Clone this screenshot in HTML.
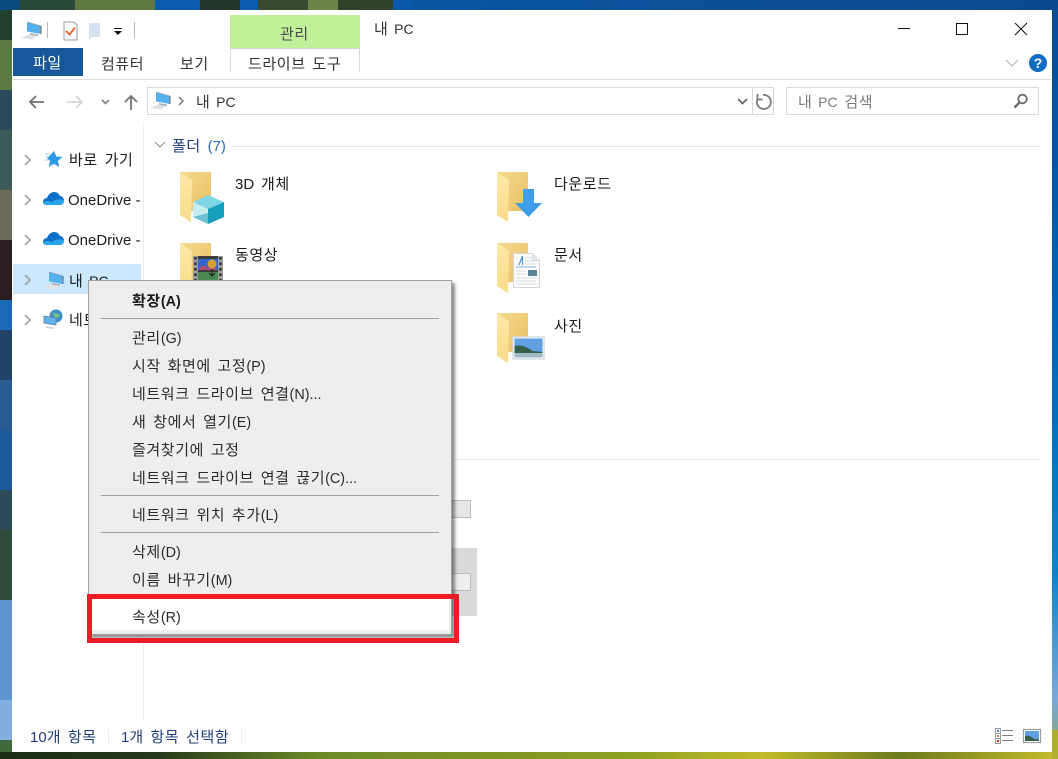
<!DOCTYPE html>
<html lang="ko">
<head>
<meta charset="utf-8">
<title>내 PC</title>
<style>
html,body{margin:0;padding:0;width:1058px;height:759px;overflow:hidden;background:#0058a8}
body{position:relative;font-family:"Liberation Sans","Noto Sans CJK KR",sans-serif;font-size:15px;color:#1a1a1a}
.a{position:absolute}
.t{position:absolute;white-space:nowrap;height:20px;line-height:20px;letter-spacing:.6px;word-spacing:2px;margin-top:2px}
.t i{font-style:normal;letter-spacing:0}
.t i.p{font-size:14px;margin-left:-1px}
svg{position:absolute;overflow:visible}
.m{color:#2b2b2b}
.m i{font-size:14.4px}
.sep{position:absolute;left:101px;width:338px;height:1px;background:#a0a0a0}
</style>
</head>
<body>
<svg width="1058" height="759" style="left:0;top:0">
<defs>
<linearGradient id="rg" x1="0" y1="0" x2="0" y2="1">
<stop offset="0" stop-color="#0b4a94"/><stop offset=".4" stop-color="#0062b4"/><stop offset=".75" stop-color="#0a82c8"/><stop offset=".92" stop-color="#7aa8d8"/><stop offset="1" stop-color="#8aa860"/>
</linearGradient>
<linearGradient id="tg" x1="0" y1="0" x2="1" y2="0">
<stop offset="0" stop-color="#0a5aa8"/><stop offset="1" stop-color="#0b4a90"/>
</linearGradient>
<linearGradient id="bg" x1="0" y1="0" x2="1" y2="0">
<stop offset="0" stop-color="#1c2c14"/><stop offset=".15" stop-color="#27381a"/><stop offset=".3" stop-color="#6c8a28"/><stop offset=".6" stop-color="#8ea020"/><stop offset=".72" stop-color="#c2bc28"/><stop offset=".85" stop-color="#6c7a1c"/><stop offset="1" stop-color="#c4bc2a"/>
</linearGradient>
</defs>
<rect width="1058" height="759" fill="url(#rg)"/>
<rect x="0" y="0" width="1058" height="10" fill="url(#tg)"/>
<rect x="0" y="0" width="20" height="10" fill="#0d4a80"/>
<rect x="20" y="0" width="55" height="10" fill="#2a4a38"/>
<rect x="75" y="0" width="80" height="10" fill="#5c7a40"/>
<rect x="155" y="0" width="45" height="10" fill="#0a5cb0"/>
<rect x="200" y="0" width="40" height="10" fill="#22382c"/>
<rect x="240" y="0" width="18" height="10" fill="#0a5cb0"/>
<rect x="258" y="0" width="50" height="10" fill="#3a4a2c"/>
<rect x="308" y="0" width="30" height="10" fill="#6c8448"/>
<rect x="338" y="0" width="55" height="10" fill="#32422a"/>
<rect x="393" y="0" width="20" height="10" fill="#0a58a8"/>
<rect x="0" y="10" width="12" height="30" fill="#21402e"/>
<rect x="0" y="40" width="12" height="50" fill="#5c7a44"/>
<rect x="0" y="90" width="12" height="40" fill="#2a4a5c"/>
<rect x="0" y="130" width="12" height="60" fill="#3c5a58"/>
<rect x="0" y="190" width="12" height="50" fill="#6c6a58"/>
<rect x="0" y="240" width="12" height="60" fill="#2a1e20"/>
<rect x="0" y="300" width="12" height="30" fill="#1a6ab8"/>
<rect x="0" y="330" width="12" height="50" fill="#1f4468"/>
<rect x="0" y="380" width="12" height="50" fill="#2a5c94"/>
<rect x="0" y="430" width="12" height="60" fill="#1c5a9c"/>
<rect x="0" y="490" width="12" height="40" fill="#2c4a5a"/>
<rect x="0" y="530" width="12" height="70" fill="#2c4c38"/>
<rect x="0" y="600" width="12" height="100" fill="#5c94d0"/>
<rect x="0" y="700" width="12" height="40" fill="#82aee0"/>
<rect x="0" y="740" width="12" height="19" fill="#3e6a3c"/>
<rect x="0" y="752" width="1058" height="7" fill="url(#bg)"/>
<rect x="1052" y="730" width="6" height="29" fill="#b0ae30"/>
</svg>

<!-- window -->
<div class="a" style="left:12px;top:10px;width:1040px;height:742px;background:#fff"></div>

<!-- QAT -->
<svg width="1058" height="100" style="left:0;top:0">
<defs>
<g id="pc">
<path d="M6 0l14 4v8L6 9.500z" fill="#55b0ee"/>
<path d="M6 0l14 4" stroke="#8fa4b4" stroke-width=".8" fill="none"/>
<path d="M20 4v8" stroke="#6e7a84" stroke-width="1.200" fill="none"/>
<path d="M9 11l8 1.200v2l-8-1.200z" fill="#aab4bc"/>
<path d="M0 16l8-3.500 9 1.500-6 3.500z" fill="#dfe3e6"/>
</g>
</defs>
<use href="#pc" x="21" y="22"/>
<rect x="47" y="22" width="1" height="16" fill="#b9b9b9"/>
<path d="M64 22h10l3 3v15H64z" fill="#fbfbfb" stroke="#9c9c9c"/>
<path d="M66 31l3.500 3.500 5.500-7" fill="none" stroke="#e8591c" stroke-width="1.700"/>
<path d="M89 23l11 0v14l-8 0-3 3z" fill="#d6e2f0"/>
<rect x="114" y="28" width="8" height="1" fill="#111"/>
<path d="M114 31h8l-4 4z" fill="#111"/>
<rect x="134" y="22" width="1" height="16" fill="#b9b9b9"/>
<!-- nav arrows -->
<path d="M44 102H30M36 96l-6 6 6 6" fill="none" stroke="#727272" stroke-width="1.800"/>
<path d="M67 102h15M76 96l6 6-6 6" fill="none" stroke="#d6d6d6" stroke-width="1.800"/>
<path d="M102 100l3.500 3.500L109 100" fill="none" stroke="#808080" stroke-width="1.600"/>
<path d="M131 110V96M125 102l6-6 6 6" fill="none" stroke="#727272" stroke-width="1.800"/>
<!-- window controls -->
<rect x="898" y="28" width="12" height="1" fill="#111"/>
<rect x="956.500" y="23.500" width="11" height="11" fill="none" stroke="#111"/>
<path d="M1015 23l12 12M1027 23l-12 12" stroke="#111" stroke-width="1" fill="none"/>
<path d="M1006 60l6 6 6-6" fill="none" stroke="#b5b5b5" stroke-width="1.100"/>
<circle cx="1038" cy="63" r="9" fill="#0f6cc4"/>
</svg>
<div class="a" style="left:1029px;top:54px;width:18px;height:18px;line-height:18px;text-align:center;color:#fff;font-weight:bold;font-size:14px">?</div>

<!-- ribbon -->
<div class="a" style="left:230px;top:15px;width:130px;height:33px;background:#c1f09b"></div>
<div class="t" style="left:280px;top:23px;color:#4a4a4a">관리</div>
<div class="t" style="left:374px;top:17px;color:#333">내 <i class="p">PC</i></div>
<div class="a" style="left:13px;top:48px;width:70px;height:28px;background:#19579b"></div>
<div class="t" style="left:33px;top:52px;color:#fff">파일</div>
<div class="t" style="left:101px;top:53px;color:#333">컴퓨터</div>
<div class="t" style="left:180px;top:53px;color:#333">보기</div>
<div class="a" style="left:230px;top:48px;width:130px;height:24px;border-left:1px solid #d9d9d9;border-right:1px solid #d9d9d9;border-top:1px solid #d4d4d4;box-sizing:border-box"></div>
<div class="t" style="left:248px;top:53px;color:#333">드라이브 도구</div>
<div class="a" style="left:12px;top:79px;width:1039px;height:1px;background:#dcdcdc"></div>

<!-- address bar -->
<div class="a" style="left:147px;top:87px;width:627px;height:28px;border:1px solid #d9d9d9;box-sizing:border-box"></div>
<div class="a" style="left:752px;top:87px;width:1px;height:28px;background:#d9d9d9"></div>
<div class="a" style="left:786px;top:87px;width:253px;height:28px;border:1px solid #d9d9d9;box-sizing:border-box"></div>
<svg width="1058" height="130" style="left:0;top:0">
<use href="#pc" x="150" y="92"/>
<path d="M179 97l4 4-4 4" fill="none" stroke="#7a7a7a" stroke-width="1.500"/>
<path d="M738 99l4.500 4.500L747 99" fill="none" stroke="#666" stroke-width="1.700"/>
<path d="M763 95a7 7 0 1 1-5.500 4M757.500 94v5.500h5" fill="none" stroke="#808080" stroke-width="1.900"/>
<circle cx="1022.500" cy="99" r="4.300" fill="none" stroke="#6a6a6a" stroke-width="1.800"/>
<path d="M1019.500 102.500l-5 5" stroke="#6a6a6a" stroke-width="2.400"/>
</svg>
<div class="t" style="left:196px;top:90px;color:#333">내 <i class="p">PC</i></div>
<div class="t" style="left:798px;top:90px;color:#7a7a7a">내 <i class="p">PC</i> 검색</div>

<!-- nav pane -->
<div class="a" style="left:143px;top:122px;width:1px;height:600px;background:#efefef"></div>
<div class="a" style="left:13px;top:264px;width:128px;height:30px;background:#cce8ff"></div>
<svg width="150" height="340" style="left:0;top:0">
<defs>
<g id="cloud">
<path d="M47 205c-3 0-4.500-2-4-4 .5-2 2.500-3 4-3 1-3.500 4-6 7-6 3 0 5 1.500 6 4 2 0 4 2 4 4.500 0 2.500-1.500 4.500-4 4.500z" fill="#0f70c8"/>
<path d="M47 205c-2.500 0-4-1.500-4-3 3-1.500 6-1 9 0 3-2.500 8-3.500 12-1.500 0 2.500-1.500 4.500-4 4.500z" fill="#2aa4ea"/>
</g>
</defs>
<g fill="none" stroke="#a6a6a6" stroke-width="1.800">
<path d="M25 155l5 5-5 5"/><path d="M25 195l5 5-5 5"/><path d="M25 235l5 5-5 5"/><path d="M25 275l5 5-5 5"/><path d="M25 315l5 5-5 5"/>
</g>
<path d="M54 151l2.400 5.500 6 .5-4.500 4 1.400 6-5.300-3.200-5.300 3.200 1.400-6-3-2.600z" fill="#2f9be8"/>
<path d="M45 154h5M46 157h3M45 160h3" stroke="#9ccbee" stroke-width="1"/>
<use href="#cloud"/>
<use href="#cloud" y="40"/>
<use href="#pc" x="43" y="272"/>
<circle cx="56" cy="316" r="6.500" fill="#3d8fc8"/>
<path d="M52 312c2 2 6 1 8 3-1 2-3 2-4 4" fill="#7ec27a"/>
<path d="M44 316l12 2v7l-12-2z" fill="#5fb4ec" stroke="#5c7f9a" stroke-width=".8"/>
<path d="M46 326l9 1.500-2 1.500-7-1z" fill="#cfd4d8"/>
</svg>
<div class="t" style="left:69px;top:149px">바로 가기</div>
<div class="a" style="left:68px;top:187px;width:74px;height:26px;overflow:hidden"><div class="t" style="left:0;top:2px;letter-spacing:0;word-spacing:0">OneDrive - Personal</div></div>
<div class="a" style="left:68px;top:227px;width:74px;height:26px;overflow:hidden"><div class="t" style="left:0;top:2px;letter-spacing:0;word-spacing:0">OneDrive - Personal</div></div>
<div class="t" style="left:69px;top:269px">내 <i class="p">PC</i></div>
<div class="t" style="left:69px;top:309px">네트워크</div>

<!-- content -->
<svg width="1058" height="759" style="left:0;top:0">
<defs>
<linearGradient id="fp" x1="0" y1="0" x2="1" y2="1"><stop offset="0" stop-color="#f5d98e"/><stop offset="1" stop-color="#e9c063"/></linearGradient>
<linearGradient id="ff" x1="0" y1="0" x2="0" y2="1"><stop offset="0" stop-color="#fde9a8"/><stop offset="1" stop-color="#f9dc8a"/></linearGradient>
<g id="fo">
<path d="M0 0h31v39H11z" fill="url(#fp)"/>
<path d="M0 0l12 8-1 42-11-7z" fill="url(#ff)"/>
</g>
</defs>
<path d="M155 142l5 5 5-5" fill="none" stroke="#8f8f8f" stroke-width="1.100"/>
<rect x="232" y="146" width="808" height="1" fill="#e6e6e6"/>
<rect x="454" y="459" width="586" height="1" fill="#e6e6e6"/>
<use href="#fo" x="180" y="172"/>
<use href="#fo" x="180" y="243"/>
<use href="#fo" x="497" y="172"/>
<use href="#fo" x="497" y="243"/>
<use href="#fo" x="497" y="313"/>
<!-- 3D -->
<path d="M193 202l15-7 16 7-16 7z" fill="#7fd6e4"/>
<path d="M193 202l15 7v15l-15-7z" fill="#c6eef2"/>
<path d="M208 209l16-7v15l-16 7z" fill="#16a0bd"/>
<path d="M193 217l15-4 16 4-16 7z" fill="#1d9db7" opacity=".55"/>
<!-- download -->
<path d="M523 189h11v14h8l-13.500 14-13.500-14h8z" fill="#3d9ee9"/>
<!-- video -->
<rect x="193" y="256" width="30" height="30" fill="#3c3c3c"/>
<rect x="193" y="256" width="5" height="30" fill="#9a9a9a"/>
<rect x="218" y="256" width="5" height="30" fill="#9a9a9a"/>
<path d="M195.500 257v29M220.500 257v29" stroke="#333" stroke-width="2.500" stroke-dasharray="2.500 3"/>
<rect x="198" y="259" width="20" height="11" fill="#3366cc"/>
<path d="M198 270l5-5 5 3 4-2 6 4z" fill="#b04a70"/>
<rect x="198" y="272" width="20" height="12" fill="#4a8a50"/>
<circle cx="212" cy="264" r="4.500" fill="#d8a030"/>
<path d="M212 269v6M209 273l3 3 3-3" stroke="#222" stroke-width="1.200" fill="none"/>
<!-- doc -->
<path d="M513.500 253.500h19l7 7v27h-26z" fill="#fbfbfb" stroke="#d5d5d5"/>
<path d="M532.500 253.500v7h7" fill="#e8e8e8" stroke="#d5d5d5"/>
<path d="M516 271h10M516 274h10M516 278h20M516 281h20M516 284h20" stroke="#d8dde3"/>
<path d="M516 267h20" stroke="#7bb8e4"/>
<path d="M519 265l3.500-9M522.500 256v9" stroke="#4a96d8" fill="none" stroke-width="1.200"/>
<path d="M525 258h8M525 261h10M525 264h10" stroke="#cfe0ee"/>
<rect x="528" y="270" width="9" height="6" fill="#5b8296"/>
<!-- photo -->
<rect x="513" y="337" width="31" height="22" fill="#fff" stroke="#d6dbdf" stroke-width="1.500"/>
<rect x="514.500" y="338.500" width="28" height="19" fill="#5f9fe2"/>
<path d="M514.500 346c8-2 14 2 18 5l10 1v5.500h-28z" fill="#36604c"/>
<rect x="514.500" y="353" width="28" height="4.500" fill="#9fb9c6"/>
<!-- disks behind menu -->
<rect x="440.500" y="500.500" width="30" height="17" fill="#e6e6e6" stroke="#bcbcbc"/>
<rect x="440" y="548" width="37" height="68" fill="#d9d9d9"/>
<rect x="440.500" y="573.500" width="30" height="17" fill="#eeeeee" stroke="#bcbcbc"/>
<!-- view icons -->
<g fill="#fff" stroke="#9c9c9c">
<rect x="995.500" y="728.500" width="5" height="5"/><rect x="995.500" y="733.500" width="5" height="5"/><rect x="995.500" y="738.500" width="5" height="5"/>
</g>
<rect x="997" y="730" width="2" height="2" fill="#3a8ad0"/><rect x="997" y="735" width="2" height="2" fill="#a88a30"/><rect x="997" y="740" width="2" height="2" fill="#c03020"/>
<path d="M1002 730.500h11M1002 735.500h11M1002 740.500h11" stroke="#808080"/>
<rect x="1023.500" y="729.500" width="17" height="13" fill="#fff" stroke="#a0a0a0" stroke-width="1.200"/>
<rect x="1025" y="731" width="14" height="10" fill="#5f9fe2"/>
<path d="M1025 736c4-1 7 1 9 3l5 .5V741h-14z" fill="#36604c"/>
</svg>
<div class="t" style="left:172px;top:135px;color:#1f3d7a">폴더 <i style="color:#2a6cc0">(7)</i></div>
<div class="t" style="left:235px;top:173px"><i>3D</i> 개체</div>
<div class="t" style="left:235px;top:244px">동영상</div>
<div class="t" style="left:554px;top:173px">다운로드</div>
<div class="t" style="left:554px;top:244px">문서</div>
<div class="t" style="left:554px;top:315px">사진</div>

<!-- status bar -->
<div class="t" style="left:30px;top:726px;color:#1f3d7a"><i>10</i>개 항목</div>
<div class="a" style="left:108px;top:729px;width:1px;height:15px;background:#ececec"></div>
<div class="t" style="left:121px;top:726px;color:#1f3d7a"><i>1</i>개 항목 선택함</div>
<div class="a" style="left:241px;top:729px;width:1px;height:15px;background:#ececec"></div>

<!-- context menu -->
<div class="a" style="left:88px;top:280px;width:364px;height:355px;background:#eeeeee;border:1px solid #a0a0a0;box-sizing:border-box;box-shadow:3px 3px 3px rgba(0,0,0,.45)"></div>
<div class="t m" style="left:132px;top:290px;font-weight:bold;color:#1a1a1a">확장<i>(A)</i></div>
<div class="sep" style="top:318px"></div>
<div class="t m" style="left:132px;top:327px">관리<i>(G)</i></div>
<div class="t m" style="left:132px;top:355px">시작 화면에 고정<i>(P)</i></div>
<div class="t m" style="left:132px;top:383px">네트워크 드라이브 연결<i>(N)...</i></div>
<div class="t m" style="left:132px;top:411px">새 창에서 열기<i>(E)</i></div>
<div class="t m" style="left:132px;top:439px">즐겨찾기에 고정</div>
<div class="t m" style="left:132px;top:467px">네트워크 드라이브 연결 끊기<i>(C)...</i></div>
<div class="sep" style="top:495px"></div>
<div class="t m" style="left:132px;top:504px">네트워크 위치 추가<i>(L)</i></div>
<div class="sep" style="top:532px"></div>
<div class="t m" style="left:132px;top:541px">삭제<i>(D)</i></div>
<div class="t m" style="left:132px;top:569px">이름 바꾸기<i>(M)</i></div>
<div class="a" style="left:92px;top:599px;width:357px;height:31px;background:#fff"></div>
<div class="t m" style="left:132px;top:606px">속성<i>(R)</i></div>
<!-- red frame -->
<div class="a" style="left:87px;top:594px;width:372px;height:49px;border:5px solid #ed1c24;box-sizing:border-box"></div>
</body>
</html>
